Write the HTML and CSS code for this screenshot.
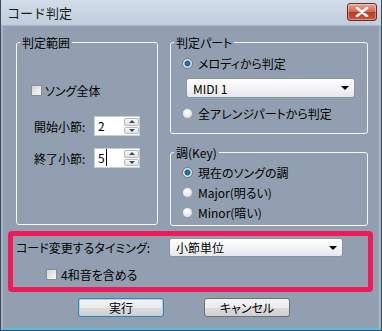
FILE: index.html
```html
<!DOCTYPE html>
<html lang="ja">

<head>
    <meta charset="UTF-8" />
    <title>コード判定</title>
    <link rel="stylesheet" href="styles.css">
</head>

<body>
    <div class="window">
        <div class="titlebar">
            <span class="title">コード判定</span>
            <span class="close">
                <svg width="14" height="10" viewBox="0 0 14 10">
                    <path d="M2 1 L12 9 M12 1 L2 9" stroke="#fff" stroke-width="2.6" stroke-linecap="round" />
                </svg>
            </span>
        </div>

        <div class="client">
            <div class="groups">
                <fieldset class="group range">
                    <legend>判定範囲</legend>
                    <div class="check-row first">
                        <span class="checkbox"></span>ソング全体
                    </div>
                    <div class="spin-row">
                        <span class="spin-label">開始小節:</span>
                        <span class="spin">
                            <span class="spin-value">2</span>
                            <span class="spin-buttons">
                                <span class="spin-btn"><span class="arrow-up"></span></span>
                                <span class="spin-btn"><span class="arrow-down"></span></span>
                            </span>
                        </span>
                    </div>
                    <div class="spin-row second">
                        <span class="spin-label">終了小節:</span>
                        <span class="spin">
                            <span class="spin-value"><span class="caret">5</span></span>
                            <span class="spin-buttons">
                                <span class="spin-btn"><span class="arrow-up"></span></span>
                                <span class="spin-btn"><span class="arrow-down"></span></span>
                            </span>
                        </span>
                    </div>
                </fieldset>

                <div class="right-col">
                    <fieldset class="group part">
                        <legend>判定パート</legend>
                        <div class="radio-row first"><span class="radio on"></span>メロディから判定</div>
                        <div class="dropdown part-select"><span>MIDI 1</span><span class="arrow-down big"></span></div>
                        <div class="radio-row"><span class="radio"></span>全アレンジパートから判定</div>
                    </fieldset>

                    <fieldset class="group key">
                        <legend>調(Key)</legend>
                        <div class="radio-row first"><span class="radio on"></span>現在のソングの調</div>
                        <div class="radio-row"><span class="radio"></span>Major(明るい)</div>
                        <div class="radio-row"><span class="radio"></span>Minor(暗い)</div>
                    </fieldset>
                </div>
            </div>

            <div class="highlight">
                <div class="timing-row">
                    <span class="timing-label">コード変更するタイミング:</span>
                    <div class="dropdown timing-select"><span>小節単位</span><span class="arrow-down big"></span></div>
                </div>
                <div class="check-row chord4">
                    <span class="checkbox"></span>4和音を含める
                </div>
            </div>

            <div class="buttons">
                <button class="btn default">実行</button>
                <button class="btn">キャンセル</button>
            </div>
        </div>
    </div>
</body>

</html>
```

FILE: styles.css
```css
body {
    margin: 0;
    font-family: "Noto Sans CJK JP", "Noto Sans", sans-serif;
    font-size: 12px;
    font-feature-settings: "palt";
    color: #000;
}

.window {
    width: 382px;
    height: 331px;
    box-sizing: border-box;
    background: #929fb0;
    border: 1px solid #3c4a5c;
    border-top: none;
    overflow: hidden;
}

.titlebar {
    height: 26px;
    display: flex;
    align-items: center;
    justify-content: space-between;
    padding: 0 4px 0 6px;
    background: linear-gradient(#d2dde9, #bfcddc);
    border-bottom: 1px solid #a9b7c7;
    box-sizing: border-box;
}

.title {
    font-size: 13px;
    color: #1b1b1b;
    font-feature-settings: normal;
}

.close {
    width: 30px;
    height: 18px;
    box-sizing: border-box;
    display: flex;
    align-items: center;
    justify-content: center;
    border: 1px solid #6b2a22;
    border-radius: 3px;
    background: linear-gradient(#e9a597, #d2634c 50%, #bb3a22 51%, #c95a3e);
    box-shadow: inset 0 0 0 1px rgba(255, 255, 255, 0.35);
    margin-bottom: 2px;
}

.client {
    height: 304px;
    box-sizing: border-box;
    border-left: 2px solid #a7b4c3;
    border-right: 2px solid #a7b4c3;
    border-bottom: 2px solid #4cc3ec;
    padding-top: 10px;
}

.groups {
    display: flex;
    gap: 12px;
    padding-left: 13px;
}

.group {
    margin: 0;
    padding: 0;
    border: 1px solid #f5f7fa;
    border-radius: 3px;
    box-sizing: border-box;
    min-width: 0;
}

.group legend {
    padding: 0 2px;
    margin-left: 3px;
    line-height: 13px;
}

.range {
    width: 142px;
    height: 189px;
}

.right-col {
    display: flex;
    flex-direction: column;
    gap: 12px;
}

.part {
    width: 198px;
    height: 98px;
}

.key {
    width: 198px;
    height: 80px;
}

.check-row,
.radio-row {
    display: flex;
    align-items: center;
    height: 16px;
    gap: 3px;
}

.range .check-row.first {
    margin: 33px 0 0 14px;
}

.checkbox {
    width: 11px;
    height: 11px;
    box-sizing: border-box;
    border: 1px solid #8a8c8f;
    background: linear-gradient(135deg, #d4d6d9, #f6f6f6);
}

.spin-row {
    display: flex;
    align-items: center;
    margin: 18px 0 0 17px;
}

.spin-row.second {
    margin-top: 12px;
}

.spin-label {
    width: 60px;
}

.spin {
    display: flex;
    height: 20px;
    width: 46px;
    background: #fff;
    border: 1px solid #c8ced6;
    box-sizing: border-box;
}

.spin-value {
    flex: 1;
    padding-left: 3px;
    line-height: 18px;
}

.caret {
    border-right: 1px solid #000;
    padding-right: 1px;
}

.spin-buttons {
    width: 16px;
    display: flex;
    flex-direction: column;
    gap: 1px;
    padding: 1px 0 1px 1px;
    box-sizing: border-box;
}

.spin-btn {
    flex: 1;
    display: flex;
    align-items: center;
    justify-content: center;
    border: 1px solid #b5bac1;
    border-radius: 2px;
    background: linear-gradient(#f6f7f8, #dde1e6);
}

.arrow-up {
    border-left: 3px solid transparent;
    border-right: 3px solid transparent;
    border-bottom: 3px solid #3f4a58;
}

.arrow-down {
    border-left: 3px solid transparent;
    border-right: 3px solid transparent;
    border-top: 3px solid #3f4a58;
}

.arrow-down.big {
    border-left-width: 4px;
    border-right-width: 4px;
    border-top: 4px solid #000;
}

.radio-row {
    gap: 5px;
    margin: 4px 0 0 11px;
}

.part .radio-row.first {
    margin-top: 6px;
}

.part .radio-row {
    margin-top: 7px;
}

.key .radio-row.first {
    margin-top: 5px;
}

.radio {
    width: 11px;
    height: 11px;
    border-radius: 50%;
    box-sizing: border-box;
    border: 1px solid #9aa0a8;
    background: radial-gradient(circle at 40% 35%, #ffffff, #d3d6da);
}

.radio.on {
    border-color: #6b7a8c;
    background: radial-gradient(circle at 50% 50%, #2d7fb8 0, #1a5e95 2.5px, #e9edf2 3.5px, #c8ced6 100%);
}

.dropdown {
    display: flex;
    align-items: center;
    justify-content: space-between;
    height: 20px;
    box-sizing: border-box;
    padding: 0 5px 0 6px;
    border: 1px solid #8c96a3;
    border-radius: 3px;
    background: linear-gradient(#ffffff, #f3f4f6 50%, #e4e7eb);
}

.part-select {
    width: 169px;
    margin: 7px 0 0 15px;
}

.highlight {
    margin: 5px 0 0 5px;
    width: 365px;
    height: 61px;
    box-sizing: border-box;
    border: 5px solid #ee1a5c;
    border-radius: 4px;
    padding: 2px 0 0 3px;
}

.timing-row {
    display: flex;
    align-items: center;
}

.timing-label {
    width: 153px;
}

.timing-select {
    width: 174px;
    height: 19px;
}

.check-row.chord4 {
    margin: 9px 0 0 30px;
    gap: 4px;
}

.buttons {
    display: flex;
    gap: 40px;
    margin: 6px 0 0 75px;
}

.btn {
    width: 86px;
    height: 19px;
    padding: 0;
    font: inherit;
    font-feature-settings: "palt";
    border: 1px solid #707070;
    border-radius: 3px;
    background: linear-gradient(#f4f4f4, #ebebeb 50%, #dcdcdc 51%, #cfcfcf);
    line-height: 16px;
}

.btn.default {
    border-color: #3c7fb1;
    box-shadow: inset 0 0 0 1px #a8d8f0;
}
```
